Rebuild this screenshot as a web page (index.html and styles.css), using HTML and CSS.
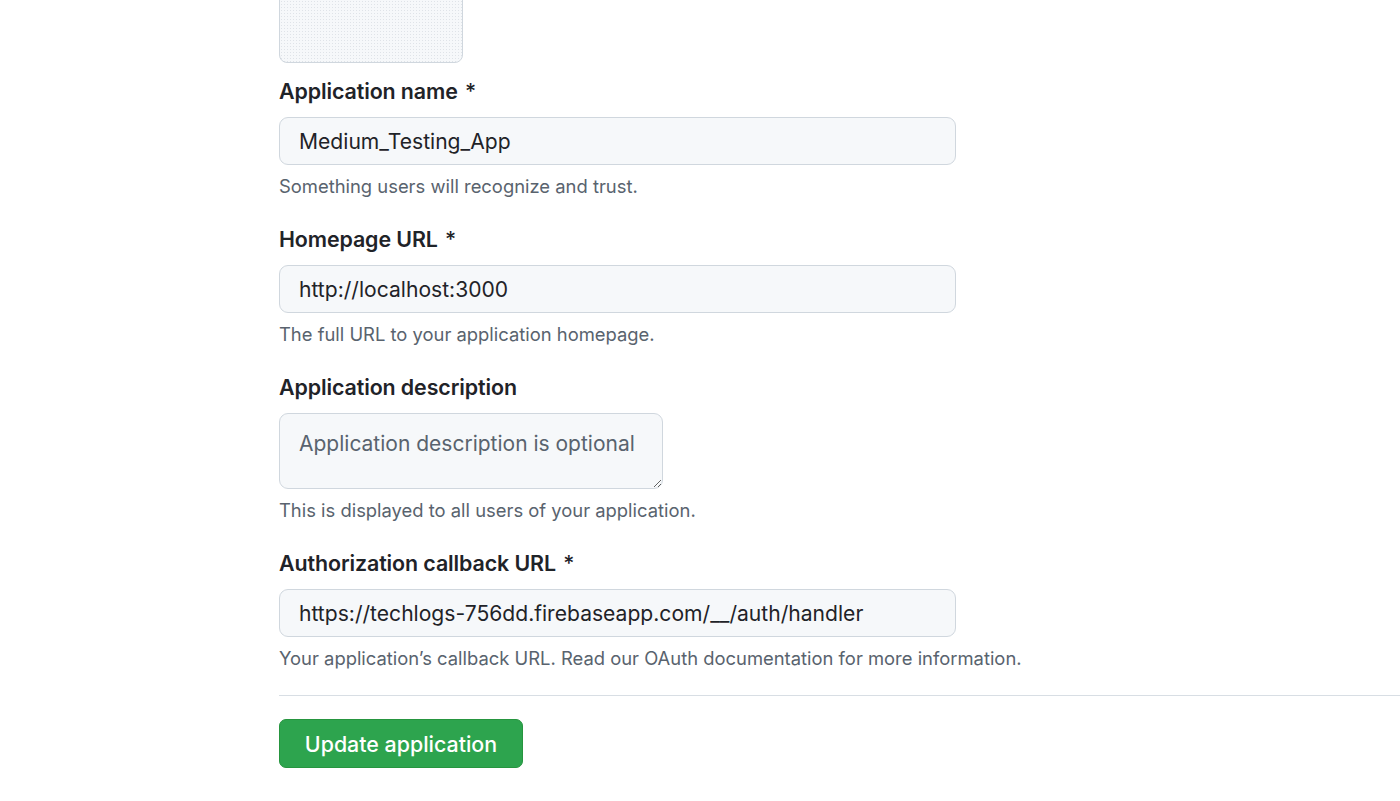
FILE: index.html
```html
<!DOCTYPE html>
<html lang="en">
<head>
<meta charset="utf-8">
<title>Update application</title>
<link rel="stylesheet" href="styles.css">
</head>
<body>
<main class="form">
  <div class="logo-box"></div>

  <div class="group">
    <label class="label" for="name">Application name <span class="req">*</span></label>
    <input class="field" id="name" type="text" value="Medium_Testing_App">
    <p class="note">Something users will recognize and trust.</p>
  </div>

  <div class="group">
    <label class="label" for="home">Homepage URL <span class="req">*</span></label>
    <input class="field" id="home" type="text" value="http://localhost:3000">
    <p class="note">The full URL to your application homepage.</p>
  </div>

  <div class="group">
    <label class="label" for="desc">Application description</label>
    <textarea class="area" id="desc" placeholder="Application description is optional"></textarea>
    <p class="note">This is displayed to all users of your application.</p>
  </div>

  <div class="group">
    <label class="label" for="cb">Authorization callback URL <span class="req">*</span></label>
    <input class="field" id="cb" type="text" value="https://techlogs-756dd.firebaseapp.com/__/auth/handler">
    <p class="note">Your application’s callback URL. Read our <a class="link" href="#">OAuth documentation</a> for more information.</p>
  </div>

  <hr class="rule">

  <button class="btn" type="button">Update application</button>
</main>
</body>
</html>
```

FILE: styles.css
```css
html, body {
  margin: 0;
  padding: 0;
  background: #ffffff;
  overflow: hidden;
}
body {
  font-family: Inter, "Liberation Sans", Arial, sans-serif;
  color: #1f2328;
}
.form {
  margin-left: 279px;
  display: flex;
  flex-direction: column;
  align-items: flex-start;
}
.logo-box {
  width: 184px;
  height: 184px;
  margin-top: -121px;
  box-sizing: border-box;
  border: 1px solid #d0d7de;
  border-radius: 8px;
  background-color: #f6f8fa;
  background-image: radial-gradient(#dfe3e8 0.6px, transparent 0.8px);
  background-size: 3px 3px;
}
.group {
  display: flex;
  flex-direction: column;
  align-items: flex-start;
}
.logo-box + .group { margin-top: 13px; }
.group + .group { margin-top: 26px; }
.label {
  font-size: 21.4px;
  font-weight: 600;
  line-height: 30px;
  height: 30px;
  margin-bottom: 11px;
  letter-spacing: -0.1px;
}
.req {
  margin-left: 2px;
  font-weight: 500;
}
.field, .area {
  box-sizing: border-box;
  width: 677px;
  height: 48px;
  padding: 0 19px;
  border: 1px solid #d0d7de;
  border-radius: 9px;
  background: #f6f8fa;
  font-family: inherit;
  font-size: 21.1px;
  color: #1f2328;
  outline: none;
  margin: 0;
}
.area {
  width: 384px;
  height: 76px;
  padding: 16px 19px;
  line-height: 28px;
  font-size: 21px;
  resize: vertical;
  display: block;
}
.area::placeholder { color: #59636e; }
.note {
  margin: 9px 0 0;
  font-size: 18.4px;
  line-height: 24px;
  color: #59636e;
}
.link {
  color: #59636e;
  text-decoration: none;
}
.rule {
  align-self: stretch;
  margin: 25px 0 0;
  border: 0;
  border-top: 1px solid #d8dee4;
  height: 0;
}
.btn {
  margin-top: 23px;
  width: 244px;
  height: 49px;
  border: 1px solid #26953f;
  border-radius: 7px;
  background: #2da44e;
  color: #ffffff;
  font-family: inherit;
  font-size: 21.4px;
  font-weight: 500;
  padding: 0;
}
```
